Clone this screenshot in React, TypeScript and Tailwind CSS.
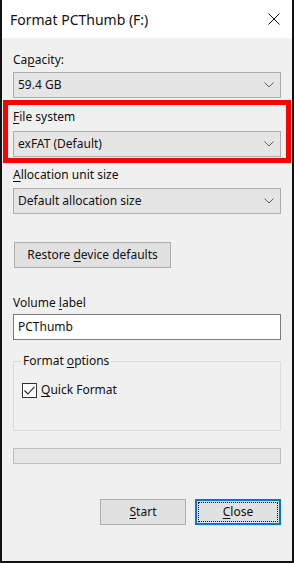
import React from 'react';

const font = { fontFamily: '"Noto Sans", "Open Sans", sans-serif' };

const Chevron: React.FC = () => (
  <svg width="10" height="6" viewBox="0 0 10 6" className="shrink-0">
    <polyline points="0.5,0.5 5,5 9.5,0.5" fill="none" stroke="#606060" strokeWidth={1} />
  </svg>
);

const Mn: React.FC<{ children: React.ReactNode }> = ({ children }) => (
  <span className="underline underline-offset-2 decoration-1">{children}</span>
);

const Select: React.FC<{ value: string }> = ({ value }) => (
  <div className="h-[26px] bg-[#e5e5e5] border border-[#adadad] flex items-center justify-between pl-[4px] pr-[6px]">
    <span>{value}</span>
    <Chevron />
  </div>
);

const Label: React.FC<{ children: React.ReactNode; className?: string }> = ({ children, className }) => (
  <div className={`h-4 leading-4 ${className ?? ''}`}>{children}</div>
);

export default function App() {
  return (
    <div
      className="w-[294px] h-[563px] bg-[#f0f0f0] border-2 border-t-0 border-[#111] flex flex-col text-[12px] text-[#111] overflow-hidden relative"
      style={font}
    >
      {/* title bar */}
      <div className="h-[38px] bg-white flex items-center justify-between pl-[8px] pr-[12px] shrink-0">
        <span className="text-[14px]">Format PCThumb (F:)</span>
        <svg width="12" height="12" viewBox="0 0 12 12">
          <path d="M0.5 0.5 L11.5 11.5 M11.5 0.5 L0.5 11.5" stroke="#111" strokeWidth={1} />
        </svg>
      </div>

      <div className="px-[11px] flex flex-col">
        <Label className="mt-[14px]">
          Ca<Mn>p</Mn>acity:
        </Label>
        <div className="mt-[4px]">
          <Select value="59.4 GB" />
        </div>

        <div className="relative">
          {/* highlight annotation */}
          <div className="absolute left-[-10px] right-[-10px] top-[2px] h-[63px] border-[5px] border-[#ff0000] pointer-events-none" />
          <Label className="mt-[11px]">
            <Mn>F</Mn>ile system
          </Label>
          <div className="mt-[6px]">
            <Select value="exFAT (Default)" />
          </div>
        </div>

        <Label className="mt-[10px]">
          <Mn>A</Mn>llocation unit size
        </Label>
        <div className="mt-[5px]">
          <Select value="Default allocation size" />
        </div>

        <button className="mt-[28px] ml-[1px] w-[157px] h-[26px] bg-[#e1e1e1] border border-[#adadad] flex items-center justify-center">
          <span>
            Restore <Mn>d</Mn>evice defaults
          </span>
        </button>

        <Label className="mt-[27px]">
          Volume <Mn>l</Mn>abel
        </Label>
        <div className="mt-[3px] h-[26px] bg-white border border-[#7a7a7a] flex items-center pl-[4px]">
          PCThumb
        </div>

        <fieldset className="mt-[13px] h-[78px] border border-[#dcdcdc] px-[8px]">
          <legend className="px-[2px] ml-[-1px] leading-4">
            Format <Mn>o</Mn>ptions
          </legend>
          <div className="mt-[12px] flex items-center gap-[4px]">
            <div className="w-[15px] h-[15px] bg-white border border-[#333] flex items-center justify-center">
              <svg width="11" height="9" viewBox="0 0 11 9">
                <polyline points="0.5,4.5 3.8,8 10.5,0.8" fill="none" stroke="#222" strokeWidth={1.1} />
              </svg>
            </div>
            <span>
              <Mn>Q</Mn>uick Format
            </span>
          </div>
        </fieldset>

        <div className="mt-[17px] h-[16px] bg-[#e6e6e6] border border-[#bcbcbc]" />

        <div className="mt-[35px] flex justify-end gap-[9px]">
          <button className="w-[86px] h-[26px] bg-[#e1e1e1] border border-[#adadad] flex items-center justify-center">
            <span>
              <Mn>S</Mn>tart
            </span>
          </button>
          <button className="w-[86px] h-[26px] bg-[#e1e1e1] border-2 border-[#0078d7] flex items-center justify-center p-[1px]">
            <span className="w-full h-full border border-dotted border-black flex items-center justify-center">
              <span>
                <Mn>C</Mn>lose
              </span>
            </span>
          </button>
        </div>
      </div>
    </div>
  );
}
